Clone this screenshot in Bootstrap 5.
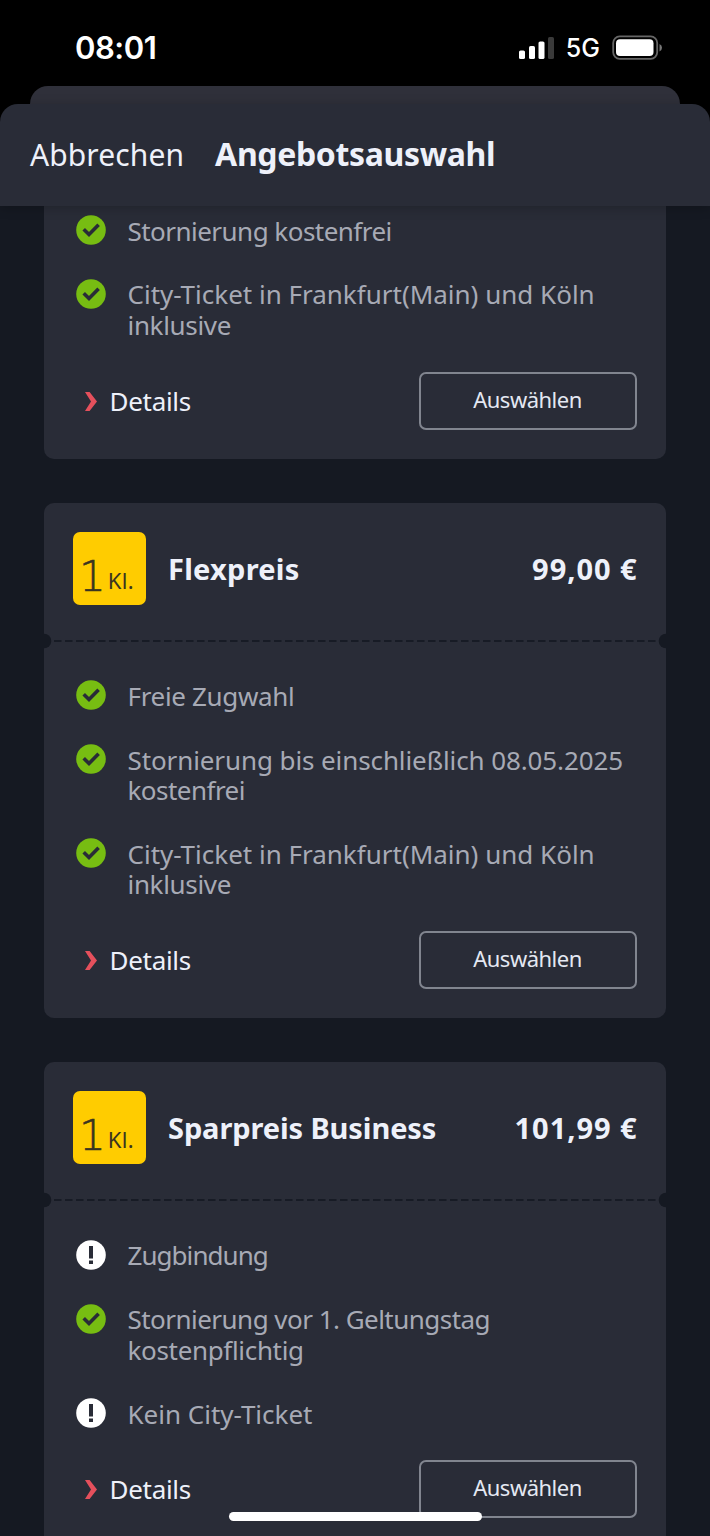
<!DOCTYPE html>
<html lang="de">
<head>
<meta charset="utf-8">
<meta name="viewport" content="width=device-width, initial-scale=1">
<title>Angebotsauswahl</title>
<link rel="stylesheet" href="https://cdn.jsdelivr.net/npm/bootstrap@5.3.0/dist/css/bootstrap.min.css">
<style>
  :root { --page: #151922; --panel: #292c37; }
  body { width: 710px; height: 1536px; background: #000; color: #eef1fa; font-family: "Noto Sans", sans-serif; font-size: 26px; line-height: 30.5px; }
  .status { height: 86px; padding: 9px 47px 0 75px; font-family: Inter, sans-serif; color: #fff; }
  .clock { font-size: 31px; font-weight: 600; letter-spacing: -.5px; padding-top: 1px; }
  .net { font-size: 25px; font-weight: 500; padding-top: 2px; margin: 0 12px 0 11px; }
  .sheet-back { height: 18px; margin: 0 30px; background: #2f303a; border-radius: 18px 18px 0 0; }
  .sheet-head { height: 102px; background: var(--panel); border-radius: 18px 18px 0 0; padding: 0 30px; gap: 31px; box-shadow: 0 2px 12px rgba(0,0,0,.22); z-index: 1; }
  .cancel { font-size: 30px; letter-spacing: .1px; }
  .heading { font-size: 32px; font-weight: 700; letter-spacing: -.35px; margin-top: -2px; }
  .offers { background: var(--page); padding: 0 44px; gap: 44px; }
  .offer { background: var(--panel); border-radius: 10px; flex: none; }
  .offer.cut { border-radius: 0 0 10px 10px; }
  .offer-head { height: 138px; padding: 0 29px; }
  .klasse { width: 73px; height: 73px; border-radius: 7px; background: #fc0; color: #3a3420; padding: 0 0 12px 6px; margin: -7px 22px 0 0; gap: 2px; line-height: 1; }
  .num { font: 200 42px/32px "DejaVu Sans", sans-serif; -webkit-text-stroke: .6px #3a3420; }
  .kl { font-weight: 400; font-size: 22px; line-height: 20px; letter-spacing: .3px; margin-bottom: 3px; }
  .name, .price { font-size: 29px; font-weight: 700; margin-top: -5px; }
  .name { letter-spacing: .25px; }
  .price { letter-spacing: .95px; margin-right: -.5px; }
  .name.long { letter-spacing: -.1px; }
  .tear { height: 0; }
  .tear svg { position: absolute; left: 0; top: -8px; }
  .offer-body { padding: 40.300px 29px 29px; }
  .cut .offer-body { padding-top: 9.600px; }
  .terms { gap: 33.300px; color: #a7aab5; margin-bottom: 31.200px; }
  .term svg { flex: none; margin: -.5px 21.500px 0 3px; }
  .s1 { letter-spacing: -.1px; }
  .s3 { letter-spacing: -.33px; }
  .s5 { letter-spacing: -.53px; }
  .s9 { letter-spacing: -.95px; }
  .pick { width: 218px; height: 58px; border: 2px solid #81858f; border-radius: 7px; color: #e4e8f2; font-size: 22px; letter-spacing: -.5px; padding: 0 1px 3px 0; }
  .more { gap: 12.500px; padding: 1px 0 0 12px; letter-spacing: -.3px; }
  .home { left: 229px; bottom: 15px; width: 253px; height: 9px; border-radius: 5px; background: #fff; }
</style>
</head>
<body class="position-relative overflow-hidden d-flex flex-column">
<svg width="0" height="0" class="position-absolute">
  <symbol id="ok" viewBox="0 0 30 30"><circle cx="15" cy="15" r="14.800" fill="#77bd12"/><path d="M7.700 14.200 13 19.500 22.600 9.800" fill="none" stroke="#292c37" stroke-width="3.600"/></symbol>
  <symbol id="warn" viewBox="0 0 30 30"><circle cx="15" cy="15" r="14.800" fill="#fff"/><path d="M13 6h4v12.500h-4zM13 20.500h4v3.500h-4z" fill="#292c37"/></symbol>
  <symbol id="arrow" viewBox="0 0 12 19"><path d="M0 0h4.600L12 9.500 4.600 19H0l6-9.500z" fill="#e5505c"/></symbol>
  <symbol id="perforation" viewBox="0 0 622 16"><path d="M10 8H614" stroke="#171b25" stroke-width="2.200" stroke-dasharray="7.500 3.500"/><circle cx="0" cy="8" r="7.300" fill="#151922"/><circle cx="622" cy="8" r="7.300" fill="#151922"/></symbol>
</svg>

<div class="status d-flex align-items-center flex-shrink-0">
  <span class="clock me-auto">08:01</span>
  <svg width="37" height="24" viewBox="0 0 37 24"><g fill="#fff"><rect x="1" y="14.500" width="6" height="8.500" rx="1.600"/><rect x="11" y="10" width="6" height="13" rx="1.600"/><rect x="20.500" y="5.500" width="6" height="17.500" rx="1.600"/></g><rect x="30" y="1" width="6" height="22" rx="1.600" fill="#3a3a3a"/></svg>
  <span class="net">5G</span>
  <svg width="51" height="26" viewBox="0 0 51 26"><rect x="1.200" y="1.400" width="44" height="22.400" rx="6.500" fill="none" stroke="#666" stroke-width="1.800"/><rect x="4" y="4.200" width="37.500" height="16.800" rx="4" fill="#fff"/><path d="M47.500 9q2.500 1 2.500 3.700t-2.500 3.700z" fill="#777"/></svg>
</div>
<div class="sheet-back flex-shrink-0"></div>
<header class="sheet-head d-flex align-items-center flex-shrink-0 position-relative">
  <span class="cancel">Abbrechen</span>
  <span class="heading">Angebotsauswahl</span>
</header>

<main class="offers flex-grow-1 d-flex flex-column overflow-hidden">
  <section class="offer cut">
    <div class="offer-body">
      <div class="terms d-flex flex-column">
        <div class="term d-flex"><svg width="30" height="30"><use href="#ok"/></svg><span class="s5">Stornierung kostenfrei</span></div>
        <div class="term d-flex"><svg width="30" height="30"><use href="#ok"/></svg><span>City-Ticket in Frankfurt(Main) und Köln<br><span class="s3">inklusive</span></span></div>
      </div>
      <div class="d-flex justify-content-between align-items-center"><span class="more d-flex align-items-center"><svg width="12" height="19"><use href="#arrow"/></svg><span>Details</span></span><button class="btn pick">Auswählen</button></div>
    </div>
  </section>

  <section class="offer">
    <div class="offer-head d-flex align-items-center">
      <div class="klasse d-flex align-items-end"><span class="num">1</span><span class="kl">Kl.</span></div>
      <span class="name me-auto">Flexpreis</span><span class="price">99,00 €</span>
    </div>
    <div class="tear position-relative"><svg width="622" height="16"><use href="#perforation"/></svg></div>
    <div class="offer-body">
      <div class="terms d-flex flex-column">
        <div class="term d-flex"><svg width="30" height="30"><use href="#ok"/></svg><span class="s3">Freie Zugwahl</span></div>
        <div class="term d-flex"><svg width="30" height="30"><use href="#ok"/></svg><span class="s1">Stornierung bis einschließlich 08.05.2025<br><span class="s5">kostenfrei</span></span></div>
        <div class="term d-flex"><svg width="30" height="30"><use href="#ok"/></svg><span>City-Ticket in Frankfurt(Main) und Köln<br><span class="s3">inklusive</span></span></div>
      </div>
      <div class="d-flex justify-content-between align-items-center"><span class="more d-flex align-items-center"><svg width="12" height="19"><use href="#arrow"/></svg><span>Details</span></span><button class="btn pick">Auswählen</button></div>
    </div>
  </section>

  <section class="offer">
    <div class="offer-head d-flex align-items-center">
      <div class="klasse d-flex align-items-end"><span class="num">1</span><span class="kl">Kl.</span></div>
      <span class="name long me-auto">Sparpreis Business</span><span class="price">101,99 €</span>
    </div>
    <div class="tear position-relative"><svg width="622" height="16"><use href="#perforation"/></svg></div>
    <div class="offer-body">
      <div class="terms d-flex flex-column">
        <div class="term d-flex"><svg width="30" height="30"><use href="#warn"/></svg><span class="s9">Zugbindung</span></div>
        <div class="term d-flex"><svg width="30" height="30"><use href="#ok"/></svg><span class="s5">Stornierung vor 1. Geltungstag<br><span class="s3">kostenpflichtig</span></span></div>
        <div class="term d-flex"><svg width="30" height="30"><use href="#warn"/></svg><span>Kein City-Ticket</span></div>
      </div>
      <div class="d-flex justify-content-between align-items-center"><span class="more d-flex align-items-center"><svg width="12" height="19"><use href="#arrow"/></svg><span>Details</span></span><button class="btn pick">Auswählen</button></div>
    </div>
  </section>
</main>
<div class="home position-absolute"></div>
<script src="https://cdn.jsdelivr.net/npm/bootstrap@5.3.0/dist/js/bootstrap.bundle.min.js"></script>
</body>
</html>
